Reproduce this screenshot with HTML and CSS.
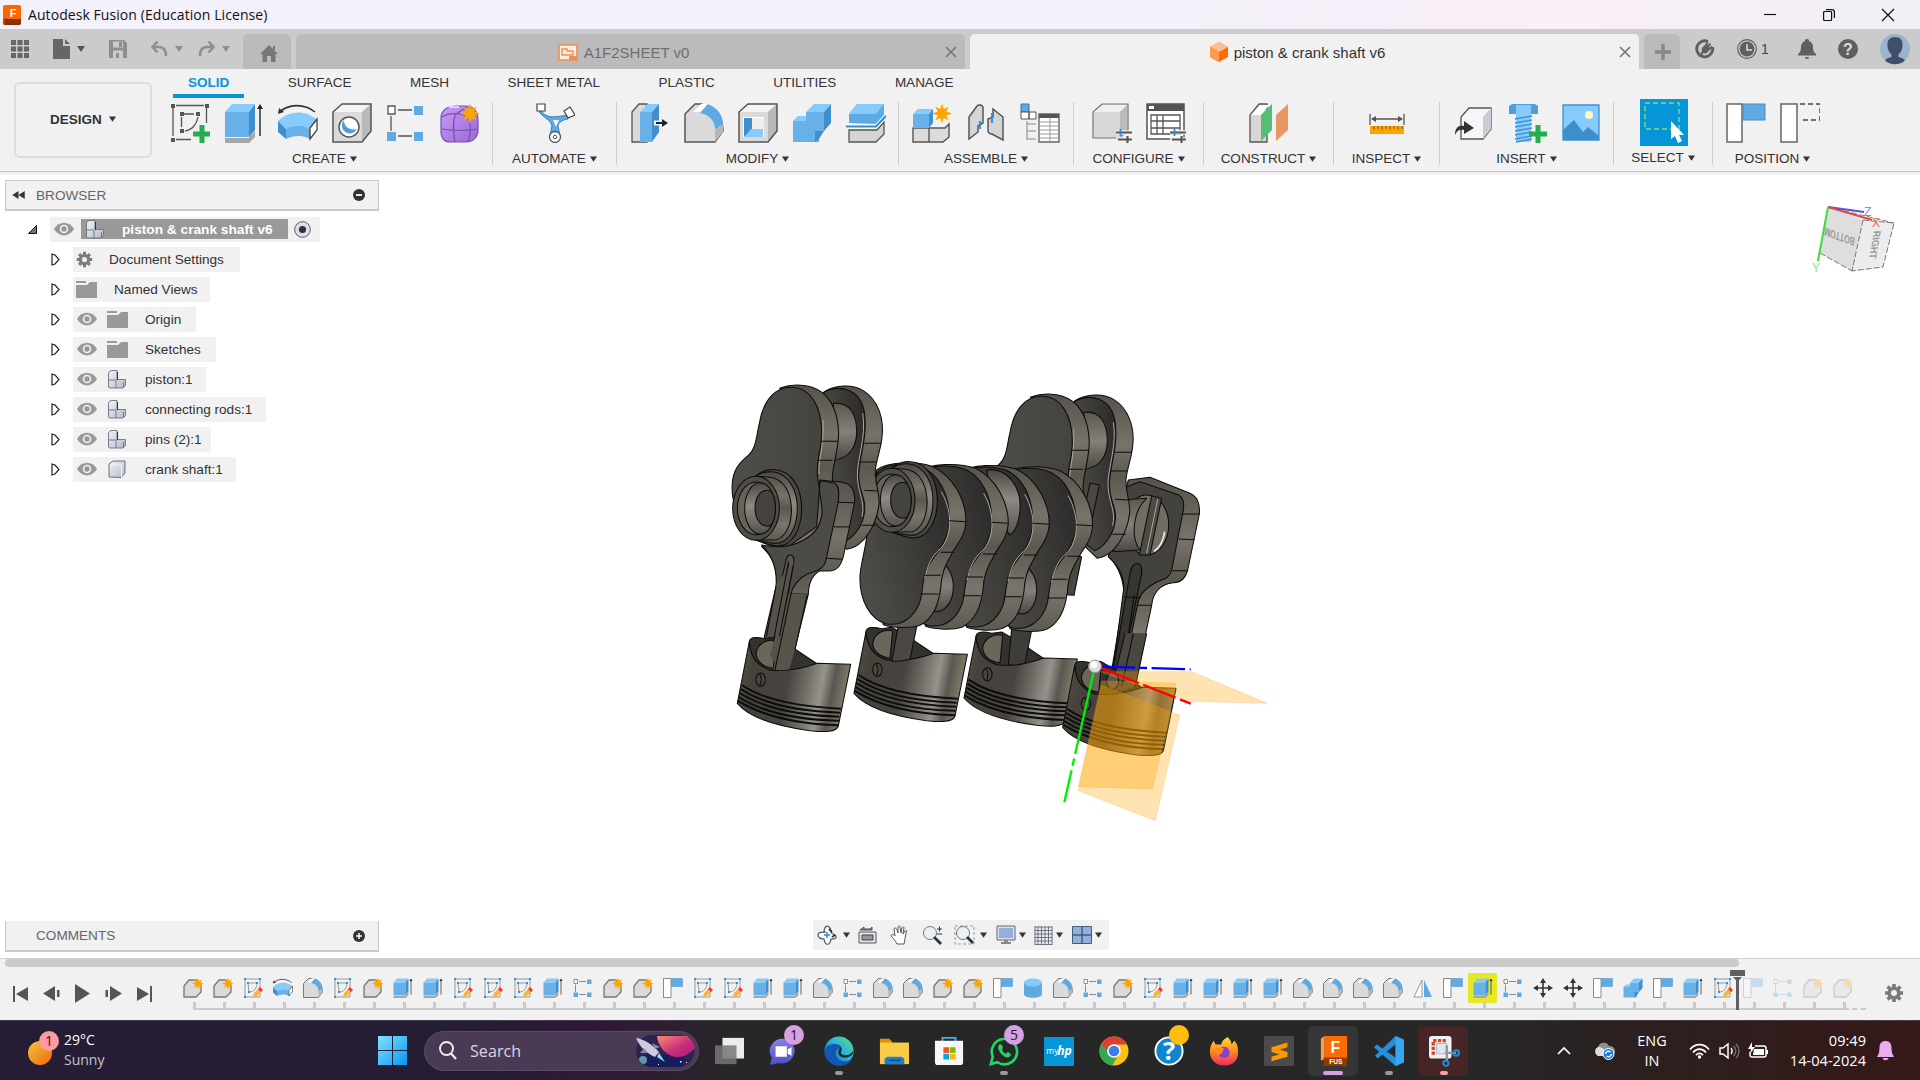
FILE: index.html
```html
<!DOCTYPE html>
<html lang="en">
<head>
<meta charset="utf-8">
<title>Autodesk Fusion (Education License)</title>
<link rel="stylesheet" href="styles.css">
</head>
<body>
<svg class="defs" width="0" height="0">
  <defs>
    <linearGradient id="gSide" x1="0" y1="0" x2="0" y2="1"><stop offset="0" stop-color="#55524b"/><stop offset=".3" stop-color="#77736a"/><stop offset=".5" stop-color="#5b5850"/><stop offset=".75" stop-color="#79756c"/><stop offset="1" stop-color="#5d5a51"/></linearGradient>
    <linearGradient id="gFace" x1="0" y1="0" x2="1" y2="0"><stop offset="0" stop-color="#504e49"/><stop offset="1" stop-color="#45433f"/></linearGradient>
    <linearGradient id="gFaceD" x1="0" y1=".6" x2="1" y2=".2"><stop offset="0" stop-color="#4e4c48"/><stop offset=".5" stop-color="#3f3d3a"/><stop offset="1" stop-color="#2d2b29"/></linearGradient>
    <linearGradient id="gPin" x1="0" y1="0" x2="0" y2="1"><stop offset="0" stop-color="#5b584f"/><stop offset=".5" stop-color="#85807a"/><stop offset="1" stop-color="#4a4740"/></linearGradient>
    <linearGradient id="gPis" x1="0" y1="0" x2="1" y2=".15"><stop offset="0" stop-color="#5a564c"/><stop offset=".18" stop-color="#45423c"/><stop offset=".5" stop-color="#47443f"/><stop offset=".66" stop-color="#6f6c66"/><stop offset=".8" stop-color="#96938c"/><stop offset=".9" stop-color="#5b5750"/><stop offset="1" stop-color="#7b7566"/></linearGradient>
    <linearGradient id="gRing" x1="0" y1="0" x2="0" y2="1"><stop offset="0" stop-color="#4b4843"/><stop offset=".45" stop-color="#8d8a84"/><stop offset="1" stop-color="#55524b"/></linearGradient>
    <linearGradient id="gGray" x1="0" y1="0" x2="1" y2="1"><stop offset="0" stop-color="#f0f2f7"/><stop offset="1" stop-color="#b4bac6"/></linearGradient>
    <linearGradient id="gEdge" x1="1" y1="0" x2="0" y2="1"><stop offset="0" stop-color="#63e06b"/><stop offset=".4" stop-color="#2db9d8"/><stop offset="1" stop-color="#0b62c4"/></linearGradient>
    <linearGradient id="gFox" x1="0" y1="0" x2="0" y2="1"><stop offset="0" stop-color="#ffd93b"/><stop offset=".5" stop-color="#ff8a1e"/><stop offset="1" stop-color="#f0246c"/></linearGradient>
    <linearGradient id="gSun" x1="0" y1="0" x2="1" y2="1"><stop offset="0" stop-color="#f6c33a"/><stop offset="1" stop-color="#ee6a12"/></linearGradient>
    <linearGradient id="gWin" x1="0" y1="0" x2="1" y2="1"><stop offset="0" stop-color="#7fe3ff"/><stop offset="1" stop-color="#0a95f5"/></linearGradient>
    <linearGradient id="gChat" x1="0" y1="0" x2="0" y2="1"><stop offset="0" stop-color="#8a7fe6"/><stop offset="1" stop-color="#4950c4"/></linearGradient>
    <linearGradient id="gPlanet" x1="0" y1="0" x2="1" y2="1"><stop offset="0" stop-color="#ff8a72"/><stop offset=".55" stop-color="#c92f7c"/><stop offset=".85" stop-color="#b0207c"/><stop offset="1" stop-color="#ff9a72"/></linearGradient>
    <linearGradient id="gForm" x1="0" y1="0" x2="1" y2="1"><stop offset="0" stop-color="#c79bf5"/><stop offset="1" stop-color="#9b68d6"/></linearGradient>
  </defs>

  <symbol id="star" viewBox="0 0 20 20"><path d="M10 0l1.800 5.600L16.800 3l-2.600 5L20 10l-5.800 2L16.800 17l-5-2.600L10 20l-1.800-5.600L3.200 17l2.600-5L0 10l5.800-2L3.200 3l5 2.600z" fill="#f9a602"/></symbol>
  <symbol id="plus" viewBox="0 0 18 18"><path d="M6.500 0h5v6.500H18v5h-6.500V18h-5v-6.500H0v-5h6.500z" fill="#25ae4f"/></symbol>

  <symbol id="i-sketch" viewBox="0 0 40 40"><g fill="none" stroke="#555" stroke-width="1.300"><path d="M6 2.500h28M3 5v28M36.500 5v15M6 36.500h15"/><path d="M14 11h10M11.500 14v10M28 14c-1 7-6 13-13 14"/></g><path d="M1 1h4v4H1zM35 1h4v4h-4zM1 35h4v4H1zM10 9h4v4h-4zM26 9h4v4h-4zM10 26h4v4h-4z" fill="#555"/><use href="#plus" x="23" y="22" width="18" height="18"/></symbol>
  <symbol id="i-extrude" viewBox="0 0 40 40"><path d="M1 35h24v5H1zM25 40l6-6v-6l-6 6z" fill="#a6a6a6"/><path d="M1 34V9h24v25z" fill="#68b1e8"/><path d="M1 9l7-8h23l-6 8z" fill="#86cbfb"/><path d="M25 9l6-8v26l-6 7z" fill="#3f8fcf"/><path d="M36 5v28" stroke="#222" stroke-width="1.400"/><path d="M36 1l3 5h-6z" fill="#222"/></symbol>
  <symbol id="i-revolve" viewBox="0 0 40 40"><path d="M2 9C10 1 26 0 37 9" fill="none" stroke="#333" stroke-width="1.600"/><path d="M0 11l1-6 5 4z" fill="#333"/><path d="M0 18C12 7 28 7 39 17l-7 9c-6-4-16-5-24 0z" fill="#86cbfb"/><path d="M8 26c8-5 18-4 24 0v10c-6-4-16-4-24 0z" fill="#68b1e8"/><path d="M0 18l8 8v10L0 29z" fill="#3f8fcf"/><path d="M32 25l7-9v11l-7 9z" fill="#fff" stroke="#444" stroke-width="1.300"/></symbol>
  <symbol id="cube" viewBox="0 0 40 40"><path d="M1 39V9l9-8h29v27L30 39z" fill="#dadada"/><path d="M1 9l9-8h29l-9 8z" fill="#f4f4f4"/><path d="M30 9l9-8v27l-9 11z" fill="#b9b9b9"/><path d="M1 39V9l9-8h29v27L30 39z" fill="none" stroke="#555" stroke-width="1.500"/></symbol>
  <symbol id="i-hole" viewBox="0 0 40 40"><use href="#cube"/><circle cx="17" cy="24" r="10" fill="#fff" stroke="#555" stroke-width="1.500"/><path d="M12 17a8 8 0 1 0 13 9c-7 2-13-2-13-9z" fill="#4f9ed9"/></symbol>
  <symbol id="i-pattern" viewBox="0 0 40 40"><path d="M12 7h14M5 13v15M12 33h14" stroke="#555" stroke-width="1.300" fill="none"/><path d="M2 3h7v8H2z" fill="#fff" stroke="#555" stroke-width="1.300"/><path d="M28 3h9v9h-9zM1 29h9v9H1zM28 29h9v9h-9z" fill="#5faae2"/></symbol>
  <symbol id="i-form" viewBox="0 0 40 40"><path d="M1 15C1 7 8 3 16 3h10c8 0 12 6 12 14v10c0 7-5 12-12 12H10c-6 0-9-4-9-10z" fill="url(#gForm)" stroke="#7a4fb5" stroke-width="1.200"/><path d="M2 26c12 2 24 2 36 0M15 39C13 28 13 16 16 11L27 4M2 14c6-4 16-4 26-1 3 8 3 18 0 26" stroke="#7a4fb5" fill="none" stroke-width="1.200"/><path d="M9 4h10" stroke="#e4ccff" stroke-width="2"/><use href="#star" x="20" y="0" width="20" height="21"/></symbol>
  <symbol id="i-automate" viewBox="0 0 40 40"><path d="M6 7c4 8 12 8 26 5l1 4c-6 1-9 3-10 7l2 9c1 8-12 8-10 0l2-9c-1-6-8-8-13-14z" fill="#5faae2" stroke="#3d7fb5"/><path d="M18 17h6l-3 7z" fill="#f1f1f1"/><circle cx="20" cy="34" r="5.500" fill="#fff" stroke="#555" stroke-width="1.300"/><circle cx="20" cy="34" r="1.800" fill="none" stroke="#555"/><path d="M2 1h8v7H2zM29 8l6-4 5 8-7 3z" fill="#fff" stroke="#444" stroke-width="1.200"/></symbol>
  <symbol id="i-press" viewBox="0 0 40 40"><path d="M2 39V9l7-8h8v38z" fill="#dadada" stroke="#555" stroke-width="1.300"/><path d="M10 39V9h12v30z" fill="#68b1e8"/><path d="M10 9l8-8h11l-7 8z" fill="#86cbfb"/><path d="M22 9l7-8v28l-7 10z" fill="#3f8fcf"/><path d="M24 20h12" stroke="#f1f1f1" stroke-width="5"/><path d="M26 20h8" stroke="#222" stroke-width="2"/><path d="M38 20l-6-4v8z" fill="#222"/></symbol>
  <symbol id="i-fillet" viewBox="0 0 40 40"><path d="M1 39V11l10-10h6c14 3 22 14 22 27L31 39z" fill="#dadada" stroke="#555" stroke-width="1.500"/><path d="M31 27c0-9-5-15-15-17L24 1c10 4 15 12 15 20z" fill="#5faae2"/><path d="M9 9L17 1h7l-8 8z" fill="#fff"/><path d="M31 39V28l8-7v8z" fill="#b5b5b5"/></symbol>
  <symbol id="i-shell" viewBox="0 0 40 40"><use href="#cube"/><path d="M5 14h21v20H5z" fill="#fff"/><path d="M6 15h8v19H6z" fill="#3f8fcf"/><path d="M6 34l7-8h12v8z" fill="#86cbfb"/><path d="M14 15h12v11H14z" fill="#eee"/></symbol>
  <symbol id="i-combine" viewBox="0 0 40 40"><path d="M1 39V18h13V9h18v19h-5v11z" fill="#68b1e8"/><path d="M1 18l5-5h8v5zM14 9l8-8h17l-7 8z" fill="#86cbfb"/><path d="M32 9l7-8v19l-7 8zM23 39V28h9l-5 8z" fill="#3f8fcf"/></symbol>
  <symbol id="i-split" viewBox="0 0 40 40"><path d="M3 20v-9l8-10h27v12l-7 8z" fill="#5faae2"/><path d="M3 11l8-10h27l-8 10z" fill="#86cbfb"/><path d="M3 27h28l7-8v12l-8 8H3z" fill="#d4d4d4" stroke="#555" stroke-width="1.300"/><path d="M0 23.500h30L40 13" fill="none" stroke="#fff" stroke-width="4"/><path d="M0 23.500h30L40 13" fill="none" stroke="#2f8bd6" stroke-width="2"/></symbol>
  <symbol id="i-newcomp" viewBox="0 0 40 40"><path d="M1 25h32l4-4v13l-6 5H1z" fill="#dcdcdc" stroke="#555" stroke-width="1.400"/><path d="M17 25v14" stroke="#555" stroke-width="1.400"/><path d="M1 25V11h16v14z" fill="#68b1e8"/><path d="M1 11l5-5h15l-4 5z" fill="#86cbfb"/><path d="M17 11l4-5v14l-4 5z" fill="#3f8fcf"/><use href="#star" x="20" y="0" width="20" height="21"/></symbol>
  <symbol id="i-joint" viewBox="0 0 40 40"><path d="M3 14L11 3c2-2 5-1 6 1v16l-5 3v6L3 36z" fill="#d5d5d5" stroke="#555" stroke-width="1.500"/><path d="M37 37L26 31c-3 0-4-2-4-4V16l5-2V6l10 8z" fill="#d5d5d5" stroke="#555" stroke-width="1.500"/><path d="M14 18v8M26 10v10" stroke="#1f8ee8" stroke-width="1.800"/></symbol>
  <symbol id="i-bom" viewBox="0 0 40 40"><path d="M1 1h8v8H1z" fill="#5faae2" stroke="#2e78b3"/><path d="M1 9h8v7H1zM9 9h7v7H9z" fill="#fff" stroke="#555"/><path d="M7 18v19M7 21h9M7 28h9M7 36h9" stroke="#888" fill="none"/><path d="M19 11h20v28H19z" fill="#fff" stroke="#666" stroke-width="1.400"/><path d="M19 11h20v4H19z" fill="#555"/><path d="M19 19h20M19 23h20M19 27h20M19 31h20M19 35h20M30 15v24" stroke="#999"/></symbol>
  <symbol id="sliders" viewBox="0 0 18 16"><path d="M0 4h18M0 12h18" stroke="#f1f1f1" stroke-width="5"/><path d="M0 4h18M2 12h16" stroke="#555" stroke-width="2.400"/><path d="M5 0v8" stroke="#1f8ee8" stroke-width="2"/><path d="M13 8v8" stroke="#555" stroke-width="2.400"/></symbol>
  <symbol id="i-config" viewBox="0 0 40 40"><path d="M1 35V9l9-8h26v26l-8 8z" fill="#d8d8d8" stroke="#777" stroke-width="1.200"/><path d="M2 9l9-7h24l-7 7z" fill="#f0f0f0"/><path d="M28 9l7-7v25l-7 8z" fill="#bbb"/><use href="#sliders" x="23" y="26" width="18" height="14"/></symbol>
  <symbol id="i-ctable" viewBox="0 0 40 40"><path d="M1 1h37v35H1z" fill="#fff" stroke="#555" stroke-width="1.500"/><path d="M1 1h37v7H1z" fill="#555"/><path d="M3 3h5v3H3z" fill="#fff"/><path d="M5 12h29v19H5zM5 18h29M5 25h29M11 12v19M17 12v19" fill="none" stroke="#555" stroke-width="1.300"/><use href="#sliders" x="23" y="26" width="18" height="14"/></symbol>
  <symbol id="i-construct" viewBox="0 0 40 40"><path d="M1 39V12L10 1h8v38z" fill="#d6d6d6" stroke="#555" stroke-width="1.300"/><path d="M2 12l9-10h9l-8 10z" fill="#fff"/><path d="M12 38V12L23 1v26z" fill="#52bf74"/><path d="M27 38V12L39 1v26z" fill="#e79762"/></symbol>
  <symbol id="i-inspect" viewBox="0 0 40 40"><path d="M3 11v11M37 11v11M5 16h30" stroke="#555" stroke-width="1.300"/><path d="M4 16l5-3v6zM36 16l-5-3v6z" fill="#555"/><path d="M3 23h34v8H3z" fill="#f9a602"/><path d="M7 23v4M11 23v3M15 23v4M19 23v3M23 23v4M27 23v3M31 23v4M35 23v3" stroke="#7a5200" stroke-width="1"/></symbol>
  <symbol id="i-insert" viewBox="0 0 40 40"><path d="M8 36V14l8-9h22v21l-8 10z" fill="#f6f6f8" stroke="#555" stroke-width="1.300"/><path d="M30 14l8-9v21l-8 10z" fill="#c9ccd4"/><path d="M2 32c0-9 5-10 9-9v-5l10 7-10 6v-4c-4-1-7 0-9 5z" fill="#333"/></symbol>
  <symbol id="i-bolt" viewBox="0 0 40 40"><path d="M2 3l3-2h23l3 2v8H2z" fill="#4f9ed9"/><path d="M9 2h15v9H9z" fill="#86cbfb"/><path d="M9 11h15v28H9z" fill="#86cbfb"/><path d="M8 16l17-3M8 20l17-3M8 24l17-3M8 28l17-3M8 32l17-3M8 36l17-3M9 39l16-3" stroke="#3f8fcf" stroke-width="1.400"/><use href="#plus" x="22" y="22" width="18" height="18"/></symbol>
  <symbol id="i-image" viewBox="0 0 40 40"><path d="M2 2h36v35H2z" fill="#86cbfb" stroke="#3f8fcf" stroke-width="1.300"/><path d="M2 37V27l11-10 9 12 5-5 11 9v4z" fill="#3c8fca"/><circle cx="28" cy="12" r="4" fill="#fff9c8"/></symbol>
  <symbol id="i-select" viewBox="0 0 48 47"><path d="M0 0h48v47H0z" fill="#0696d7"/><path d="M5 4h34v26H5z" fill="none" stroke="#7ae07a" stroke-width="1.400" stroke-dasharray="5 3"/><path d="M31 22v18l4-3 3 7 4-2-3-6h5z" fill="#fff"/></symbol>
  <symbol id="i-flag" viewBox="0 0 40 40"><path d="M1 1h15v38H1z" fill="#fff" stroke="#666" stroke-width="1.500"/><path d="M17 1h22v16H17z" fill="#5faae2" stroke="#4a8fc2"/></symbol>
  <symbol id="i-revert" viewBox="0 0 40 40"><path d="M1 1h16v38H1z" fill="#fff" stroke="#666" stroke-width="1.500"/><path d="M20 1h20v16H20" fill="none" stroke="#444" stroke-width="1.400" stroke-dasharray="5 3"/></symbol>

  <symbol id="t-new" viewBox="0 0 20 20"><path d="M1 19V8l5-6h7l5 5v7l-5 5z" fill="#dadada" stroke="#777" stroke-width="1.300"/><use href="#star" x="9" y="-.5" width="12" height="12"/></symbol>
  <symbol id="t-sketch" viewBox="0 0 20 20"><path d="M2 1h15v18H2zM5 5h9c0 5-3 9-8 9z" fill="none" stroke="#999"/><path d="M1 0h2v2H1zM16 0h2v2h-2zM1 18h2v2H1zM4 4h2v2H4zM13 4h2v2h-2zM5 13h2v2H5z" fill="#2b8fe0"/><path d="M10 19l1-4 5-5 3 3-5 5z" fill="#f7b53a"/><path d="M15 11l2-2 3 3-2 2z" fill="#e8373e"/></symbol>
  <symbol id="t-cyl" viewBox="0 0 20 20"><path d="M1 4v12c0 5 18 5 18 0V4z" fill="#5faae2"/><ellipse cx="10" cy="4.500" rx="9" ry="4" fill="#86cbfb"/></symbol>
  <symbol id="t-mirror" viewBox="0 0 20 20"><path d="M9 2v17H1z" fill="#fff" stroke="#999"/><path d="M11 2v17h8z" fill="#5faae2"/></symbol>
  <symbol id="t-move" viewBox="0 0 20 20"><path d="M10 3v14M3 10h14" stroke="#333" stroke-width="1.600"/><path d="M10 0l3 5H7zM10 20l3-5H7zM0 10l5-3v6zM20 10l-5-3v6z" fill="#333"/></symbol>

  <symbol id="eye" viewBox="0 0 20 14"><path d="M0 7C5-1.500 15-1.500 20 7 15 15.500 5 15.500 0 7z" fill="#999"/><circle cx="10" cy="7" r="4.300" fill="#f1f1f1"/><circle cx="10" cy="7" r="2.700" fill="#999"/></symbol>
  <symbol id="folder" viewBox="0 0 21 17"><path d="M0 0h10v2H0zM0 4h11l3-3h7v16H0z" fill="#999"/></symbol>
  <symbol id="gear" viewBox="0 0 20 20"><path d="M10 1v18M1 10h18M3.600 3.600l12.800 12.800M16.400 3.600L3.600 16.400" stroke="#7b7b7b" stroke-width="3.600"/><circle cx="10" cy="10" r="4.800" fill="none" stroke="#7b7b7b" stroke-width="3.600"/><circle cx="10" cy="10" r="3" fill="#f1f1f1"/></symbol>
  <symbol id="comp" viewBox="0 0 18 19"><path d="M.5 17V2.500L3 .5h6v9h8.500v6L15 18H1.500z" fill="url(#gGray)" stroke="#6b7280" stroke-width=".9"/><path d="M8 10v8M1 10h7M15.500 12v6" stroke="#6b7280" fill="none" stroke-width=".9"/><path d="M9.500 2v8" stroke="#333" stroke-width="1"/></symbol>
  <symbol id="body" viewBox="0 0 18 19"><path d="M1 17V4l4-3h12v12l-4 4.500z" fill="url(#gGray)" stroke="#6b7280"/><path d="M2 5h11M13.500 5v12" stroke="#f5f6f9" fill="none"/></symbol>
  <symbol id="tri" viewBox="0 0 9 13"><path d="M1 1v11l3-1 4-4.500L4 2z" fill="#fff" stroke="#222" stroke-width="1.200"/></symbol>
  <symbol id="caret" viewBox="0 0 8 6"><path d="M0 0h8L4 6z" fill="currentColor"/></symbol>
  <symbol id="x" viewBox="0 0 12 12"><path d="M1 1l10 10M11 1L1 11" stroke="currentColor" stroke-width="1.700"/></symbol>
</svg>

<header class="title-bar">
  <svg class="app-logo" viewBox="0 0 18 20"><rect width="18" height="20" rx="2" fill="#f60"/><path d="M0 14l4-1v7H2a2 2 0 0 1-2-2z" fill="#b84300"/><path d="M2 14h16v4a2 2 0 0 1-2 2H2z" fill="#8a3100"/><text x="10" y="11.500" text-anchor="middle" class="logo-f">F</text></svg>
  <span class="app-title">Autodesk Fusion (Education License)</span>
  <div class="win-controls">
    <svg width="12" height="12" viewBox="0 0 12 12"><path d="M0 5.500h12" stroke="#111" stroke-width="1.200"/></svg>
    <svg width="12" height="12" viewBox="0 0 12 12"><path d="M.6 3.500a1 1 0 0 1 1-1h6a1 1 0 0 1 1 1v7a1 1 0 0 1-1 1h-6a1 1 0 0 1-1-1zM3 .6h6c1.500 0 2.400.9 2.400 2.400v6" fill="none" stroke="#111" stroke-width="1.200"/></svg>
    <svg width="12" height="12" viewBox="0 0 12 12"><path d="M0 0l12 12M12 0L0 12" stroke="#111" stroke-width="1.200"/></svg>
  </div>
</header>

<nav class="doc-bar">
  <div class="quick">
    <svg class="q-grid" viewBox="0 0 18 18"><path d="M0 0h5v5H0zM6.500 0h5v5h-5zM13 0h5v5h-5zM0 6.500h5v5H0zM6.500 6.500h5v5h-5zM13 6.500h5v5h-5zM0 13h5v5H0zM6.500 13h5v5h-5zM13 13h5v5h-5z" fill="#666"/></svg>
    <svg class="q-file" viewBox="0 0 17 20"><path d="M0 0h10v7h7v13H0zM12 0l5 5h-5z" fill="#666"/></svg>
    <svg class="q-caret"><use href="#caret"/></svg>
    <svg class="q-save" viewBox="0 0 18 18"><path d="M0 0h15l3 3v15H0zM4 1.500v6h10v-6zM4 10.500V18h10v-7.500z" fill="#8f8f8f" fill-rule="evenodd"/><path d="M10 2h3v5h-3zM7 13h3v5H7z" fill="#8f8f8f"/></svg>
    <svg class="q-undo" viewBox="0 0 17 16"><path d="M6.500.5L1.500 6l5 5.500M2 6h6c5 0 7 3 7 9" fill="none" stroke="#8f8f8f" stroke-width="2.600"/></svg>
    <svg class="q-caret dim"><use href="#caret"/></svg>
    <svg class="q-redo" viewBox="0 0 17 16"><path d="M10.500.5l5 5.500-5 5.500M15 6H9c-5 0-7 3-7 9" fill="none" stroke="#8f8f8f" stroke-width="2.600"/></svg>
    <svg class="q-caret dim"><use href="#caret"/></svg>
  </div>
  <div class="tab home"><svg width="18" height="17" viewBox="0 0 18 17"><path d="M9 0l9 9h-2.500v8H11v-6H7v6H2.500V9H0zM13 1h2v4h-2z" fill="#777"/></svg></div>
  <div class="tab doc">
    <svg width="20" height="17" viewBox="0 0 20 17"><path d="M1 1h18v15H1z" fill="#fbeee4" stroke="#ee8f4e" stroke-width="1.600"/><path d="M4 5h5v2h6v4H4z" fill="none" stroke="#ee8f4e" stroke-width="1.300"/><path d="M11 12h8v4h-8z" fill="#ee8f4e"/></svg>
    <span>A1F2SHEET v0</span><svg class="close"><use href="#x"/></svg>
  </div>
  <div class="tab doc active">
    <svg width="18" height="20" viewBox="0 0 18 20"><path d="M9 0l9 5v10l-9 5-9-5V5z" fill="#ff6a05"/><path d="M9 0l9 5-9 5-9-5z" fill="#ffc08f"/><path d="M0 5l9 5v10l-9-5z" fill="#ff9a4a"/></svg>
    <span>piston &amp; crank shaft v6</span><svg class="close"><use href="#x"/></svg>
  </div>
  <div class="tab add"><svg width="16" height="16" viewBox="0 0 16 16"><path d="M8 0v16M0 8h16" stroke="#888" stroke-width="3.400"/></svg></div>
  <div class="account">
    <svg width="20" height="20" viewBox="0 0 20 20"><path d="M13 2.500A8 8 0 1 0 17.500 8M9.500 18a8 8 0 0 0 8-7" fill="none" stroke="#5f5f5f" stroke-width="2.800"/><path d="M4 17l3-5c-1-2 0-4 2-5l3-4 1.500 1-2 3 3.500-3 1 1.500L13 9l3.500-2 1 1.500-4 3.500c-1 2-3 3-5 2l-3 4z" fill="#5f5f5f"/></svg>
    <svg width="20" height="20" viewBox="0 0 20 20"><circle cx="10" cy="10" r="9.300" fill="none" stroke="#5f5f5f" stroke-width="1.200"/><circle cx="10" cy="10" r="7.400" fill="#5f5f5f"/><path d="M10 5v6h5" fill="none" stroke="#ddd" stroke-width="1.500"/></svg>
    <span class="jobs">1</span>
    <svg class="a-bell" width="18" height="20" viewBox="0 0 18 20"><path d="M9 0c2 0 2 1.500 2 2 3 1 4 3.500 4 6 0 4 1 5.500 3 7v1.500H0V15c2-1.500 3-3 3-7 0-2.500 1-5 4-6 0-.5 0-2 2-2zM7 18h4c0 2.500-4 2.500-4 0z" fill="#5f5f5f"/></svg>
    <svg class="a-help" width="20" height="20" viewBox="0 0 20 20"><circle cx="10" cy="10" r="10" fill="#5f5f5f"/><text x="10" y="15.500" text-anchor="middle" class="q-mark">?</text></svg>
    <svg width="30" height="30" viewBox="0 0 30 30"><circle cx="15" cy="15" r="15" fill="#9db2cf"/><path d="M15 3c6 0 8 4 7.500 9-.3 4-2 7-4 8v3c3 1 5 1 6.500 3.500a15 15 0 0 1-20 0C6.500 24 8.500 24 11.500 23v-3c-2-1-3.700-4-4-8C7 7 9 3 15 3z" fill="#3f4f68"/></svg>
  </div>
</nav>

<section class="ribbon">
  <div class="workspace"><div class="ws-button">DESIGN <svg class="caret"><use href="#caret"/></svg></div></div>
  <div class="ribbon-main">
    <div class="ribbon-tabs"><span class="on">SOLID</span><span>SURFACE</span><span>MESH</span><span>SHEET METAL</span><span>PLASTIC</span><span>UTILITIES</span><span>MANAGE</span></div>
    <div class="groups">
      <div class="group g-create"><div class="icons"><svg><use href="#i-sketch"/></svg><svg><use href="#i-extrude"/></svg><svg><use href="#i-revolve"/></svg><svg><use href="#i-hole"/></svg><svg><use href="#i-pattern"/></svg><svg><use href="#i-form"/></svg></div><div class="label">CREATE<svg class="caret"><use href="#caret"/></svg></div></div>
      <div class="group g-automate"><div class="icons"><svg><use href="#i-automate"/></svg></div><div class="label">AUTOMATE<svg class="caret"><use href="#caret"/></svg></div></div>
      <div class="group g-modify"><div class="icons"><svg><use href="#i-press"/></svg><svg><use href="#i-fillet"/></svg><svg><use href="#i-shell"/></svg><svg><use href="#i-combine"/></svg><svg><use href="#i-split"/></svg></div><div class="label">MODIFY<svg class="caret"><use href="#caret"/></svg></div></div>
      <div class="group g-assemble"><div class="icons"><svg><use href="#i-newcomp"/></svg><svg><use href="#i-joint"/></svg><svg><use href="#i-bom"/></svg></div><div class="label">ASSEMBLE<svg class="caret"><use href="#caret"/></svg></div></div>
      <div class="group g-configure"><div class="icons"><svg><use href="#i-config"/></svg><svg><use href="#i-ctable"/></svg></div><div class="label">CONFIGURE<svg class="caret"><use href="#caret"/></svg></div></div>
      <div class="group g-construct"><div class="icons"><svg><use href="#i-construct"/></svg></div><div class="label">CONSTRUCT<svg class="caret"><use href="#caret"/></svg></div></div>
      <div class="group g-inspect"><div class="icons"><svg><use href="#i-inspect"/></svg></div><div class="label">INSPECT<svg class="caret"><use href="#caret"/></svg></div></div>
      <div class="group g-insert"><div class="icons"><svg><use href="#i-insert"/></svg><svg><use href="#i-bolt"/></svg><svg><use href="#i-image"/></svg></div><div class="label">INSERT<svg class="caret"><use href="#caret"/></svg></div></div>
      <div class="group g-select"><div class="icons"><svg class="sel"><use href="#i-select"/></svg></div><div class="label">SELECT<svg class="caret"><use href="#caret"/></svg></div></div>
      <div class="group g-position"><div class="icons"><svg><use href="#i-flag"/></svg><svg><use href="#i-revert"/></svg></div><div class="label">POSITION<svg class="caret"><use href="#caret"/></svg></div></div>
    </div>
  </div>
</section>

<main class="canvas">
  <aside class="side">
    <div class="panel browser-head"><svg width="13" height="8" viewBox="0 0 14 9"><path d="M7 0v9L0 4.500zM14 0v9L7 4.500z" fill="#333"/></svg><span>BROWSER</span><svg class="knob" viewBox="0 0 12 12"><circle cx="6" cy="6" r="6" fill="#333"/><path d="M3 6h6" stroke="#fff" stroke-width="1.800"/></svg></div>
    <div class="tree">
      <div class="row root"><svg class="open" viewBox="0 0 9 9"><path d="M8.500.5v8h-8z" fill="#777" stroke="#111"/></svg>
        <div class="chip"><svg class="eye"><use href="#eye"/></svg><div class="chosen"><svg class="comp"><use href="#comp"/></svg><span>piston &amp; crank shaft v6</span></div><svg class="radio" viewBox="0 0 18 18"><circle cx="9" cy="9" r="8.300" fill="#d9dfec" stroke="#555"/><circle cx="9" cy="9" r="3.800" fill="#333"/></svg></div></div>
      <div class="row"><svg class="tri"><use href="#tri"/></svg><div class="chip w-doc"><svg class="gear"><use href="#gear"/></svg><span class="t-doc">Document Settings</span></div></div>
      <div class="row"><svg class="tri"><use href="#tri"/></svg><div class="chip w-views"><svg class="folder"><use href="#folder"/></svg><span class="t-views">Named Views</span></div></div>
      <div class="row"><svg class="tri"><use href="#tri"/></svg><div class="chip w-origin"><svg class="eye"><use href="#eye"/></svg><svg class="folder"><use href="#folder"/></svg><span>Origin</span></div></div>
      <div class="row"><svg class="tri"><use href="#tri"/></svg><div class="chip w-sk"><svg class="eye"><use href="#eye"/></svg><svg class="folder"><use href="#folder"/></svg><span>Sketches</span></div></div>
      <div class="row"><svg class="tri"><use href="#tri"/></svg><div class="chip w-piston"><svg class="eye"><use href="#eye"/></svg><svg class="comp"><use href="#comp"/></svg><span>piston:1</span></div></div>
      <div class="row"><svg class="tri"><use href="#tri"/></svg><div class="chip w-rods"><svg class="eye"><use href="#eye"/></svg><svg class="comp"><use href="#comp"/></svg><span>connecting rods:1</span></div></div>
      <div class="row"><svg class="tri"><use href="#tri"/></svg><div class="chip w-pins"><svg class="eye"><use href="#eye"/></svg><svg class="comp"><use href="#comp"/></svg><span>pins (2):1</span></div></div>
      <div class="row"><svg class="tri"><use href="#tri"/></svg><div class="chip w-crank"><svg class="eye"><use href="#eye"/></svg><svg class="comp"><use href="#body"/></svg><span>crank shaft:1</span></div></div>
    </div>
  </aside>

  <svg class="model" viewBox="0 0 1680 1380">
    <defs>
      <g id="upBack" class="ln">
        <path d="M312 66C345 44 400 42 430 62C475 90 490 145 487 190C485 235 470 262 466 300C464 340 480 368 477 402C470 460 435 530 380 538L320 480L310 100Z" fill="url(#gSide)"/>
        <path d="M310 68C360 40 420 60 432 120C446 200 415 265 416 320C418 370 442 390 432 435C424 480 390 508 372 515L310 470Z" fill="url(#gFaceD)"/>
        <path d="M428 130C440 200 411 265 412 320C414 370 436 395 426 440" class="hl"/>
        <path d="M340 100C390 94 410 135 410 185C410 230 388 268 336 272Z" fill="url(#gPin)"/>
        <path d="M433 220H484M420 276H470M433 361L472 363M425 466H466"/>
      </g>
      <g id="upFront" class="ln">
        <path d="M180 54C230 36 290 46 320 80C350 115 360 170 354 215C350 255 338 290 337 325L345 400L300 480L200 535L150 440L200 200Z" fill="url(#gSide)"/>
        <path d="M38 380C30 315 50 285 78 262C110 240 108 200 118 160C130 90 165 50 218 52C272 54 304 110 305 185C306 240 290 262 292 312C295 362 316 400 300 448C285 492 240 532 190 535C120 530 60 480 38 380Z" fill="url(#gFace)"/>
        <path d="M309 150C312 240 295 262 297 312" class="hl"/>
        <path d="M303 214H354M292 271H338"/>
      </g>
      <g id="down" class="ln">
        <path d="M470 300C500 275 590 272 640 290C700 320 738 390 738 455C735 505 704 528 692 558C672 592 664 615 662 655C655 705 640 745 600 766C570 776 520 774 490 764L440 600Z" fill="url(#gSide)"/>
        <path d="M440 500C435 545 422 580 420 620C418 690 450 750 500 762C545 768 580 745 598 700C612 660 602 640 622 595C640 552 686 525 688 452C690 380 660 310 600 290C540 275 490 285 470 310Z" fill="url(#gFaceD)"/>
        <path d="M664 365C702 430 693 505 661 536C633 560 622 590 614 625" class="hl"/>
        <path d="M688 452L738 455M662 547H703M612 616H662M602 672H655"/>
      </g>
      <g id="piston" class="ln">
        <path d="M88 815C90 800 110 800 135 806L165 802L222 835L292 882L200 910L150 904C105 885 90 855 88 815Z" fill="#34322e"/>
        <path d="M108 850C112 818 145 806 168 812L160 895C130 890 110 875 108 850Z" fill="#6a665c"/>
        <path d="M88 815C90 855 105 885 150 900C205 906 250 895 292 880L392 883L355 1068C350 1088 310 1086 270 1082C180 1070 90 1045 52 1000Z" fill="url(#gPis)"/>
        <path d="M66 945C130 990 240 1010 363 1016M62 957C130 1002 240 1024 360 1028M59 969C130 1014 240 1036 358 1040M56 981C130 1028 240 1050 357 1052M53 992C130 1040 240 1062 355 1066" class="rings"/>
        <ellipse cx="122" cy="929" rx="14" ry="20" fill="#4b473f"/><path d="M119 912Q128 928 120 946"/>
      </g>
      <g id="hub" class="ln">
        <path d="M108 318C130 300 150 297 165 299C215 302 245 355 245 415C245 480 215 530 170 528C140 526 125 515 108 511Z" fill="#4a4843"/>
        <path d="M108 318C130 305 150 304 162 306C205 312 232 360 232 415C232 475 205 522 165 520C140 518 125 515 108 511Z" fill="url(#gRing)"/>
        <path d="M108 318L150 322C232 330 232 490 170 509L108 511Z" fill="url(#gSide)"/>
        <ellipse cx="108" cy="415" rx="70" ry="96" fill="#4f4d47"/>
        <ellipse cx="109" cy="415" rx="57" ry="79" fill="#67635a"/>
        <ellipse cx="120" cy="415" rx="46" ry="77" fill="url(#gRing)"/>
        <path d="M150 362C120 355 105 385 105 415C105 450 125 472 150 468C172 450 172 380 150 362Z" fill="#45433e"/>
      </g>
    </defs>

    <g class="ln">
      <path d="M1225 330L1290 322L1410 370C1435 380 1440 405 1438 432L1403 600C1395 630 1380 638 1360 638C1320 642 1298 670 1295 706L1245 940L1170 930L1212 680C1212 640 1200 590 1165 560Z" fill="url(#gSide)"/>
      <path d="M1220 350L1260 335L1375 374C1395 385 1394 410 1386 440L1355 600C1350 630 1320 628 1300 642C1268 660 1255 680 1252 706L1205 935L1175 930L1212 650C1210 620 1200 590 1165 560Z" fill="#44423e"/>
      <ellipse cx="1280" cy="465" rx="66" ry="90" fill="#716d64"/><path d="M1334 485C1330 515 1318 534 1302 544" class="white"/>
      <path d="M1200 390L1280 385C1240 420 1230 500 1260 540L1180 545Z" fill="url(#gPin)"/>
      <path d="M1295 378L1325 385L1290 555H1258Z" fill="#4d4b46"/><path d="M1313 388L1280 550" class="hl"/>
      <path d="M1230 610C1235 570 1270 570 1265 610L1200 930L1175 925Z" fill="#37352f"/>
      <path d="M1243 675L1205 925M1212 680L1262 684M1252 706H1296M1386 432H1438M1376 507L1424 509M1358 602H1403"/>
      <path d="M1055 560L1085 560L1062 676L1036 674Z" fill="#4a4741"/>
    </g>
    <use href="#upBack" x="752" y="27"/>
    <use href="#upFront" x="752" y="27"/>
    <path d="M1110 340L1138 345L1110 480L1080 480Z" fill="#4a4741" class="ln"/>

    <use href="#piston" x="350" y="-30"/>
    <path d="M535 765L592 760L570 868C550 873 535 875 516 873Z" fill="#4b4843" class="ln"/>
    <use href="#piston" x="680" y="-16"/>
    <path d="M875 775L935 780L915 880C895 885 880 886 865 885Z" fill="#3f3d39" class="ln"/>
    <use href="#piston" x="976" y="72"/>
    <path d="M1180 925L1215 790H1280L1248 945C1230 960 1200 965 1165 955Z" fill="#4a4741"/><path d="M1215 790L1176 950M1240 790L1205 950M1280 790L1246 950" class="ln" fill="none"/><ellipse cx="1178" cy="932" rx="18" ry="26" fill="#5a564c" class="ln"/>

    <use href="#down" x="380" y="12"/>
    <ellipse cx="905" cy="660" rx="45" ry="72" fill="url(#gPin)" class="ln"/>
    <use href="#down" x="250" y="8"/>
    <path d="M800 300C860 290 905 350 900 420C895 470 880 490 868 495L820 400Z" fill="url(#gRing)" class="ln"/>
    <use href="#down" x="127" y="5"/>
    <ellipse cx="650" cy="650" rx="50" ry="75" fill="url(#gPin)" class="ln"/>
    <use href="#down"/>
    <use href="#hub" x="407" y="-24"/>
    <use href="#upBack"/>
    <use href="#upFront"/>

    <g class="ln">
      <path d="M300 330L362 336C392 340 405 355 404 395L374 540C368 580 355 603 330 603L300 602C275 615 266 640 265 672L225 835L210 900L160 905L133 860L170 640C172 600 160 560 125 530L200 533L290 470Z" fill="url(#gSide)"/>
      <path d="M302 332L345 340C358 350 358 370 354 400L318 570C312 600 285 603 262 612C235 625 217 650 213 672L165 900L160 890L133 800L168 650C172 600 160 560 125 525C220 545 300 500 306 430C308 390 290 360 302 332Z" fill="#4d4b46"/>
      <path d="M148 800L198 570C204 548 222 550 222 575L168 870L150 860Z" fill="#5a574f"/>
      <path d="M206 575L160 850M213 671L262 673M355 397L402 398M342 470L388 471M318 565L368 568"/>
    </g>
    <use href="#hub"/>
    <use href="#piston"/>
    <path d="M160 898L205 671H263L225 838L208 898C190 901 175 902 160 898Z" fill="#57544c"/><path d="M213 671L165 899M262 673L225 838" class="ln" fill="none"/><path d="M139 800L170 640L222 575L165 880L150 855L165 802Z" fill="#55524b"/><path d="M139 800L168 650M160 815L206 575M178 800L220 585" class="ln" fill="none"/>

    <path d="M1140 905H1415L1642 1000L1415 994L1240 940Z" class="plane"/>
    <path d="M1145 933L1368 940L1298 1257L1075 1250Z" class="plane strong"/>
    <path d="M1145 945L1379 1036L1306 1352L1075 1262Z" class="plane"/>
    <path d="M1145 890L1412 898" class="axis z"/>
    <path d="M1140 893L1412 1001" class="axis x"/>
    <path d="M1120 910L1033 1297" class="axis y"/>
    <circle cx="1125" cy="889" r="19" fill="#ddd" stroke="#999" stroke-width="3"/><circle cx="1122" cy="884" r="10" fill="#fff"/>
  </svg>

  <svg class="cube" viewBox="0 0 100 80">
    <path d="M18 7L53 20 42 71 10 53z" fill="#dedede"/><path d="M53 20L84 23 73 67 42 71z" fill="#ececec"/>
    <path d="M10 53L42 71M53 20L42 71M53 20L84 23 73 67 42 71M18 7L84 23" fill="none" stroke="#777" stroke-dasharray="6 2"/>
    <path d="M18 7L54 12" stroke="#5552dd" stroke-width="2"/><path d="M18 7L62 20" stroke="#e04848" stroke-width="2"/><path d="M18 7L8 61" stroke="#3edb3e" stroke-width="2"/>
    <text transform="matrix(-.7 -.25 .12 -1.150 45 38)" class="face">BOTTOM</text>
    <text transform="matrix(-.16 .9 -1 .05 64 31)" class="face">RIGHT</text>
    <text x="54" y="16" class="ax" fill="#8a88ee">Z</text><text x="62" y="27" class="ax" fill="#f06060">X</text><text x="2" y="72" class="ax" fill="#7fe87f">Y</text>
  </svg>

  <div class="bottom-row">
    <div class="panel comments"><span>COMMENTS</span><svg class="knob" viewBox="0 0 12 12"><circle cx="6" cy="6" r="6" fill="#333"/><path d="M3 6h6M6 3v6" stroke="#fff" stroke-width="1.500"/></svg></div>
    <div class="view-bar">
      <svg width="20" height="20" viewBox="0 0 20 20"><path d="M7 8c0-9 6-9 7-1 0 3 5 1 5 5 0 2-3 2-5 2-1 7-6 7-7 0-3 0-6-1-6-4s4-3 8-3" fill="#fafafa" stroke="#556" stroke-width="1.200"/><path d="M12 4l3 3M15 12l3-2" stroke="#333" stroke-width="1.800"/><path d="M10 7v6M7 10h6" stroke="#1f8ee8" stroke-width="1.400"/></svg><svg class="caret c1"><use href="#caret"/></svg>
      <svg class="v2" width="19" height="18" viewBox="0 0 19 18"><path d="M1 6h17v11H1z" fill="#e6e6e6" stroke="#555"/><path d="M4 9h11v5H4z" fill="#8d98aa" stroke="#444"/><path d="M2 4l4-3v2h6l2-2v3z" fill="#888" stroke="#555"/></svg>
      <svg class="v3" width="20" height="20" viewBox="0 0 20 20"><path d="M7 19C5 15 3 13 1 11c0-2 2-2 4 0L4 4c1-2 2-1 3 1l1 3V2c1-2 2-1 2 0l1 6 1-5c1-2 2-1 2 0l-1 6 2-3c2-1 2 0 1 2-1 4-1 7-2 11z" fill="#fff" stroke="#555"/></svg>
      <svg class="v4" width="21" height="20" viewBox="0 0 21 20"><circle cx="8" cy="8" r="6.500" fill="#e9f1f1" stroke="#778"/><path d="M12 12l7 7" stroke="#334" stroke-width="2.800"/><path d="M15 4h5M17.500 1.500v5M15 9h5" stroke="#333"/></svg>
      <svg class="v5" width="21" height="20" viewBox="0 0 21 20"><path d="M1 1h19v18H1z" fill="none" stroke="#999" stroke-dasharray="3 2"/><circle cx="9" cy="8" r="6.500" fill="#e9f1f1" stroke="#778"/><path d="M13 12l6 6" stroke="#334" stroke-width="2.800"/></svg><svg class="caret c2"><use href="#caret"/></svg>
      <svg class="v6" width="20" height="20" viewBox="0 0 20 20"><path d="M1 1h18v14H1z" fill="#dde" stroke="#667"/><path d="M3 3h14v10H3z" fill="#94b0da"/><path d="M8 15h4v2h3v2H5v-2h3z" fill="#888"/></svg><svg class="caret c3"><use href="#caret"/></svg>
      <svg class="v7" width="19" height="19" viewBox="0 0 19 19"><path d="M0 0h19v19H0z" fill="#eceef2"/><path d="M1 .5v18M4 .5v18M7.500.5v18M11 .5v18M14.500.5v18M18 .5v18M.5 1h18M.5 4.500h18M.5 8h18M.5 11.500h18M.5 15h18M.5 18.500h18" stroke="#667" stroke-width=".9"/></svg><svg class="caret c3"><use href="#caret"/></svg>
      <svg class="v8" width="20" height="18" viewBox="0 0 20 18"><path d="M.5.500h19v17H.5z" fill="#94b0da" stroke="#445a80"/><path d="M10 1v16M1 9h18" stroke="#445a80" stroke-width="1.400"/></svg><svg class="caret c4"><use href="#caret"/></svg>
    </div>
  </div>
</main>

<section class="timeline">
  <div class="scroll"><div class="thumb"></div></div>
  <div class="tl-body">
    <div class="play">
      <svg width="15" height="16" viewBox="0 0 15 16"><path d="M0 0h2v16H0zM15 1v14L3 8z" fill="#555"/></svg>
      <svg width="17" height="15" viewBox="0 0 17 15"><path d="M12 0v15L0 7.500zM14 4h2.500v7H14z" fill="#555"/></svg>
      <svg width="15" height="19" viewBox="0 0 15 19"><path d="M0 0l15 9.500L0 19z" fill="#555"/></svg>
      <svg width="17" height="15" viewBox="0 0 17 15"><path d="M5 0v15l12-7.500zM.5 4H3v7H.5z" fill="#555"/></svg>
      <svg width="15" height="16" viewBox="0 0 15 16"><path d="M13 0h2v16h-2zM0 1v14l12-7z" fill="#555"/></svg>
    </div>
    <div class="features">
      <i><svg><use href="#t-new"/></svg></i><i><svg><use href="#t-new"/></svg></i><i><svg><use href="#t-sketch"/></svg></i><i><svg><use href="#i-revolve"/></svg></i><i><svg><use href="#i-fillet"/></svg></i><i><svg><use href="#t-sketch"/></svg></i><i><svg><use href="#t-new"/></svg></i><i><svg><use href="#i-extrude"/></svg></i><i><svg><use href="#i-extrude"/></svg></i><i><svg><use href="#t-sketch"/></svg></i><i><svg><use href="#t-sketch"/></svg></i><i><svg><use href="#t-sketch"/></svg></i><i><svg><use href="#i-extrude"/></svg></i><i><svg><use href="#i-pattern"/></svg></i><i><svg><use href="#t-new"/></svg></i><i><svg><use href="#t-new"/></svg></i>
      <i><svg><use href="#i-flag"/></svg></i><i><svg><use href="#t-sketch"/></svg></i><i><svg><use href="#t-sketch"/></svg></i><i><svg><use href="#i-extrude"/></svg></i><i><svg><use href="#i-extrude"/></svg></i><i><svg><use href="#i-fillet"/></svg></i><i><svg><use href="#i-pattern"/></svg></i><i><svg><use href="#i-fillet"/></svg></i><i><svg><use href="#i-fillet"/></svg></i><i><svg><use href="#t-new"/></svg></i><i><svg><use href="#t-new"/></svg></i><i><svg><use href="#i-flag"/></svg></i><i><svg><use href="#t-cyl"/></svg></i><i><svg><use href="#i-fillet"/></svg></i><i><svg><use href="#i-pattern"/></svg></i><i><svg><use href="#t-new"/></svg></i><i><svg><use href="#t-sketch"/></svg></i><i><svg><use href="#i-extrude"/></svg></i><i><svg><use href="#i-extrude"/></svg></i><i><svg><use href="#i-extrude"/></svg></i><i><svg><use href="#i-extrude"/></svg></i>
      <i><svg><use href="#i-fillet"/></svg></i><i><svg><use href="#i-fillet"/></svg></i><i><svg><use href="#i-fillet"/></svg></i><i><svg><use href="#i-fillet"/></svg></i><i><svg><use href="#t-mirror"/></svg></i><i><svg><use href="#i-flag"/></svg></i><i class="hot"><svg><use href="#i-extrude"/></svg></i><i><svg><use href="#i-pattern"/></svg></i><i><svg><use href="#t-move"/></svg></i><i><svg><use href="#t-move"/></svg></i><i><svg><use href="#i-flag"/></svg></i><i><svg><use href="#i-combine"/></svg></i><i><svg><use href="#i-flag"/></svg></i><i><svg><use href="#i-extrude"/></svg></i><i class="current"><svg><use href="#t-sketch"/></svg><svg class="marker" viewBox="0 0 15 40"><path d="M0 0h15v6H0zM3 7h9l-4.500 5z" fill="#5f5f5f"/><path d="M7.500 10v30" stroke="#5f5f5f" stroke-width="3"/></svg></i><i class="off"><svg><use href="#i-flag"/></svg></i><i class="off"><svg><use href="#i-pattern"/></svg></i><i class="off"><svg><use href="#t-new"/></svg></i><i class="off"><svg><use href="#t-new"/></svg></i>
    </div>
    <div class="dashes"></div>
    <svg class="tl-gear"><use href="#gear"/></svg>
  </div>
</section>

<footer class="taskbar">
  <div class="weather">
    <svg width="34" height="36" viewBox="0 0 34 36"><circle cx="13" cy="21" r="12" fill="url(#gSun)"/><circle cx="22" cy="9" r="10" fill="#ff99a4"/><text x="22" y="14" text-anchor="middle" class="badge-t">1</text></svg>
    <div><b>29°C</b><span>Sunny</span></div>
  </div>
  <svg class="start" viewBox="0 0 29 29"><path d="M0 0h14v14H0zM15 0h14v14H15zM0 15h14v14H0zM15 15h14v14H15z" fill="url(#gWin)"/></svg>
  <div class="search">
    <svg width="18" height="19" viewBox="0 0 18 19"><circle cx="7.500" cy="7.500" r="6.500" fill="none" stroke="#eee" stroke-width="1.900"/><path d="M12 12.500l5 5.500" stroke="#eee" stroke-width="2.200"/></svg>
    <span>Search</span>
    <svg class="art" width="62" height="36" viewBox="0 0 62 36"><defs><clipPath id="artClip"><rect x="2" y="2" width="58" height="32" rx="16"/></clipPath></defs><g clip-path="url(#artClip)"><path d="M0 0h62v36H0z" fill="#2a2550"/><path d="M10 22h40v14H10z" fill="#151d5c"/><circle cx="9" cy="27" r="4" fill="#5a9aac"/><path d="M46 28h1.500v1.500H46zM52 29h1v1h-1zM24 31h1v1h-1z" fill="#fff"/></g><path d="M23 3h30c4 3 7 7 8 12-5 6-12 10-20 9C31 22 24 13 23 3z" fill="url(#gPlanet)"/><path d="M2 5c8 1 17 7 23 14l-4 5C12 20 6 14 2 5z" fill="#cfc9dc"/><path d="M10 15l-4 5 8 0zM18 10l8 4-5 2z" fill="#8a84a8"/><path d="M25 20l6 9-8-5z" fill="#8fd8ff"/></svg>
  </div>
  <div class="apps">
    <div class="app"><svg viewBox="0 0 32 32"><path d="M9 2h23v22H9z" fill="#ececec"/><path d="M1 10h23v20H1z" fill="#777" fill-opacity=".85"/></svg></div>
    <div class="app"><svg viewBox="0 0 32 32"><path d="M16 3a14 13 0 1 1-6 26l-9 2 2-8A14 13 0 0 1 16 3z" fill="url(#gChat)"/><path d="M7 11h12v11H7zM20 14l4-2v9l-4-2z" fill="#fff"/></svg><em class="badge">1</em></div>
    <div class="app run"><svg viewBox="0 0 32 32"><circle cx="16" cy="16" r="15.500" fill="url(#gEdge)"/><path d="M1 14c3-6 16-8 18-1-8-1-9 12 2 14 4 0 7-1 9-3-3 6-8 7.500-13 7.500C7 31.500 0 24 1 14z" fill="#0f58b4"/><path d="M18 12c3 4-3 6 2 8s9-1 11-4c0 5-4 7-9 7-7 0-9-7-4-11z" fill="#222"/></svg></div>
    <div class="app"><svg viewBox="0 0 32 32"><path d="M1 3h10l3 3v6H1z" fill="#d9940c"/><path d="M1 7h31v23H1z" fill="#fbcb44"/><path d="M6 30v-6l3-2h15l3 2v6z" fill="#1b7fd0"/><path d="M11 26h12" stroke="#0d4d8c" stroke-width="1.500"/></svg></div>
    <div class="app"><svg viewBox="0 0 32 32"><path d="M9 7V2h14v5" fill="none" stroke="#35b6f2" stroke-width="2"/><path d="M1 5h30v23a3 3 0 0 1-3 3H4a3 3 0 0 1-3-3z" fill="#f6f6f6"/><path d="M10 12h6v6h-6z" fill="#f25022"/><path d="M17 12h6v6h-6z" fill="#7fba00"/><path d="M10 19h6v6h-6z" fill="#00a4ef"/><path d="M17 19h6v6h-6z" fill="#ffb900"/></svg></div>
    <div class="app run"><svg viewBox="0 0 32 32"><path d="M2 30l2-8A13.500 13.500 0 1 1 9 28z" fill="none" stroke="#25d366" stroke-width="2.800"/><path d="M11 9c-3 3 0 8 3 11s7 4 9 1c1-2-1-3-3-4l-2 2c-2-1-4-3-4-5l1-2c-1-2-2-4-4-3z" fill="#25d366"/></svg><em class="badge">5</em></div>
    <div class="app"><svg viewBox="0 0 32 32"><path d="M0 1h32v31H0z" fill="#0596d7"/><text x="2.500" y="19" class="my">my</text><text x="14" y="20" class="hp">hp</text></svg></div>
    <div class="app"><svg viewBox="0 0 32 32"><circle cx="16" cy="16" r="15.500" fill="#fbc116"/><path d="M2.500 8.500A15.500 15.500 0 0 1 29.500 9H16z" fill="#e33b2e"/><path d="M2.500 8.500A15.500 15.500 0 0 0 14 31.400l7-11.400z" fill="#34a853"/><path d="M3 8.500L11 21l5-12z" fill="#34a853"/><path d="M3 8.500L9 16l7-7z" fill="#e33b2e"/><circle cx="16" cy="16" r="7.300" fill="#fff"/><circle cx="16" cy="16" r="5.700" fill="#3b7ded"/></svg></div>
    <div class="app"><svg viewBox="0 0 32 32"><circle cx="16" cy="16" r="14.500" fill="#0e86cf" stroke="#fff" stroke-width="2"/><text x="16" y="26" text-anchor="middle" class="big-q">?</text></svg><em class="badge dot"></em></div>
    <div class="app"><svg viewBox="0 0 32 32"><path d="M20 1c3 4 4 5 4 8l3-4c4 4 4 9 4 13 0 8-6 13.500-15 13.500S1 25 1 17c0-5 1-8 4-12l2 4h6c1-4 3-6 7-8z" fill="url(#gFox)"/><circle cx="16" cy="17.500" r="6" fill="#8a3fd0"/><path d="M7 12l9 1-2 5-5 3z" fill="#ff8a1e"/></svg></div>
    <div class="app"><svg viewBox="0 0 32 32"><rect width="32" height="32" rx="2" fill="#4b4b4b"/><path d="M25 7v5L8 17v-5zM25 17v5L8 27v-5zM8 12l17 5v5L8 17z" fill="#ff9800"/></svg></div>
    <div class="app fus"><svg viewBox="0 0 32 32"><path d="M2 3l4-3v25l-4 1z" fill="#ff9a4a"/><path d="M6 0h24v24H6z" fill="#ff6b00"/><path d="M5 23h25v9H5z" fill="#8f3a00"/><text x="17.500" y="18" text-anchor="middle" class="f-big">F</text><text x="18" y="30" text-anchor="middle" class="f-sm">FUS</text></svg></div>
    <div class="app run"><svg viewBox="0 0 32 32"><path d="M23 0l9 4v24l-9 4L0 12l3-3 20 14V9L4 24l-3-3z" fill="#2490db"/><path d="M23 0l9 4v24l-9 4z" fill="#35a7f3"/></svg></div>
    <div class="app snip"><svg viewBox="0 0 32 32"><rect width="24" height="24" rx="3" fill="#eef2f6"/><path d="M4.500 20V5H19" fill="none" stroke="#d8421c" stroke-width="3.500" stroke-dasharray="3.500 1.500"/><path d="M8 8h11v11H8z" fill="#dfe5ec" stroke="#aab4c0"/><path d="M17 18h12M19 10v16" stroke="#8a98a8" stroke-width="2.600"/><circle cx="29" cy="18" r="3" fill="none" stroke="#1993e0" stroke-width="2"/><circle cx="18" cy="29" r="2.800" fill="none" stroke="#1993e0" stroke-width="2"/></svg></div>
  </div>
  <div class="tray">
    <svg width="14" height="9" viewBox="0 0 14 9"><path d="M1 8l6-6 6 6" fill="none" stroke="#fff" stroke-width="1.700"/></svg>
    <svg class="cloud" width="22" height="18" viewBox="0 0 22 18"><path d="M5 14a5 5 0 0 1 0-9 6 6 0 0 1 11-1 5 5 0 0 1 2 10z" fill="#8f8f8f"/><path d="M5 14a5 5 0 0 1 0-9c4 0 5 2 8 4l3 5z" fill="#ddd"/><circle cx="15.500" cy="12" r="5.500" fill="#1b7fd0" stroke="#fff"/><path d="M12.500 12a3 3 0 0 1 5-2M18.500 12a3 3 0 0 1-5 2" stroke="#fff" fill="none" stroke-width="1.400"/></svg>
    <div class="lang">ENG<br>IN</div>
    <svg class="wifi" width="21" height="16" viewBox="0 0 21 16"><path d="M1 6.500c5-6.500 14-6.500 19 0M4 9.500c3.500-4.500 9.500-4.500 13 0M7 12.200c2-2.400 5-2.400 7 0" fill="none" stroke="#fff" stroke-width="1.700"/><circle cx="10.500" cy="14" r="1.700" fill="#fff"/></svg>
    <svg class="spk" width="20" height="16" viewBox="0 0 20 16"><path d="M1 5h3l5-4v14l-5-4H1z" fill="none" stroke="#fff" stroke-width="1.500"/><path d="M12 5c1.500 2 1.500 4 0 6" fill="none" stroke="#fff" stroke-width="1.400"/><path d="M14.500 3c3 3 3 7 0 10M17 1c4 4 4 10 0 14" fill="none" stroke="#777" stroke-width="1.300"/></svg>
    <svg class="bat" width="21" height="17" viewBox="0 0 21 17"><path d="M7 4h9a2 2 0 0 1 2 2v7a2 2 0 0 1-2 2H4a2 2 0 0 1-2-2v-3" fill="none" stroke="#fff" stroke-width="1.500"/><path d="M6 7h10v6H5z" fill="#fff"/><path d="M18 8h2v4h-2zM4 0L0 7h3l-1 5 5-7H4z" fill="#fff"/></svg>
    <div class="clock">09:49<br>14-04-2024</div>
    <svg class="nbell" width="17" height="20" viewBox="0 0 17 20"><path d="M8.500 0C13 0 14.500 3 14.500 7l.5 5 2 4H0l2-4 .5-5c0-4 1.500-7 6-7zM5.500 17h6c-.5 3-5.500 3-6 0z" fill="#eaaef0"/></svg>
  </div>
</footer>
</body>
</html>
```
FILE: styles.css
```css
* { box-sizing: border-box; }
html, body { margin: 0; width: 1920px; height: 1080px; overflow: hidden; }
body { display: flex; flex-direction: column; background: #fff; color: #333; font-family: "Liberation Sans", Arial, sans-serif; font-size: 13.6px; }
svg { display: block; flex: none; overflow: visible; }
.defs { position: absolute; }
.caret { width: 7px; height: 6px; color: #333; }

.title-bar { height: 29px; flex: none; display: flex; align-items: center; padding-left: 3px; background: linear-gradient(90deg, #f3f1f9 0 62%, #f6eef8 72%, #fbeef7 82%, #f5eff7 88%, #f3eff7); }
.app-logo { width: 18px; height: 20px; }
.logo-f { font: bold 11px "Liberation Sans", sans-serif; fill: #fff; }
.app-title { margin-left: 7px; font: 14px "Open Sans", sans-serif; color: #111; letter-spacing: .07px; }
.win-controls { margin-left: auto; margin-right: 26px; display: flex; gap: 47px; align-items: center; }

.doc-bar { height: 40px; flex: none; display: flex; align-items: flex-end; background: #cbcbcb; }
.quick { width: 243px; height: 40px; padding-left: 11px; display: flex; align-items: center; }
.q-grid { width: 18px; height: 18px; }
.q-file { width: 17px; height: 20px; margin-left: 24px; }
.q-caret { width: 8px; height: 6px; margin-left: 7px; color: #555; }
.q-caret.dim { color: #8f8f8f; }
.q-save { width: 18px; height: 18px; margin-left: 24px; }
.q-undo, .q-redo { width: 17px; height: 16px; }
.q-undo { margin-left: 24px; }
.q-redo { margin-left: 15px; }
.tab { height: 35px; border-radius: 5px 5px 0 0; background: #bbb; display: flex; align-items: center; justify-content: center; }
.home { width: 48px; margin-right: 5px; padding: 4px 0 0 4px; }
.doc { width: 669px; margin-right: 5px; padding: 1px 8px 0 12px; font-size: 15px; color: #6f6f6f; gap: 6px; }
.doc > :first-child { margin-left: auto; }
.doc .close { width: 12px; height: 12px; margin-left: auto; color: #777; }
.doc.active { background: #f1f1f1; color: #333; }
.add { width: 36px; padding-left: 2px; }
.account { display: flex; align-items: center; height: 40px; margin-left: 15px; }
.account svg + svg { margin-left: 22px; }
.jobs { margin: 0 29px 0 4px; font-size: 14px; color: #444; }
.account .a-help { margin-left: 22px; }
.account svg:last-child { margin-left: 22px; }
.q-mark { font: bold 16px "Liberation Sans", sans-serif; fill: #ddd; }

.ribbon { height: 106px; flex: none; display: flex; background: #f1f1f1; position: relative; }
.ribbon::after { content: ""; position: absolute; left: 0; right: 0; top: 102px; height: 1px; background: #c6c6c6; }
.workspace { width: 157px; padding: 13px 0 0 14px; }
.ws-button { width: 138px; height: 76px; border: 2px solid #dcdcdc; border-radius: 6px; display: flex; align-items: center; justify-content: center; gap: 7px; font-weight: bold; font-size: 13.5px; padding-bottom: 2px; }
.ribbon-tabs { height: 30px; margin-left: 16px; display: flex; gap: 28.5px; font-size: 13.5px; }
.ribbon-tabs span { padding: 6px 15px 0; }
.ribbon-tabs .on { color: #0696d7; font-weight: bold; border-bottom: 4px solid #0696d7; height: 29px; }
.groups { display: flex; margin-top: 3px; height: 63px; }
.group { border-right: 1.5px solid #cfcfcf; display: flex; flex-direction: column; align-items: center; }
.group:last-child { border: 0; }
.icons { display: flex; gap: 14px; height: 41px; align-items: center; padding-top: 1px; }
.icons svg { width: 40px; height: 40px; }
.icons .sel { width: 48px; height: 47px; margin: -4px -1px -4px 1px; }
.label { display: flex; align-items: center; gap: 4px; font-size: 13.5px; margin-top: 8px; line-height: 16px; }
.g-create { width: 336px; } .g-automate { width: 124px; } .g-modify { width: 282px; } .g-assemble { width: 175px; } .g-configure { width: 130px; }
.g-construct { width: 130px; } .g-inspect { width: 106px; } .g-insert { width: 174px; } .g-select { width: 99px; } .g-position { width: 119px; }

.canvas { flex: 1; position: relative; display: flex; flex-direction: column; justify-content: space-between; background: #fff; }
.side { padding: 5px 0 0 5px; }
.panel { width: 374px; height: 31px; background: #f1f1f1; border: 1px solid #c9c9c9; border-bottom-width: 2px; display: flex; align-items: center; color: #666; }
.browser-head { padding: 0 13px 0 6px; gap: 11px; }
.knob { width: 12px; height: 12px; margin-left: auto; }
.tree { padding-top: 3px; }
.row { height: 30px; display: flex; align-items: center; padding-left: 46px; }
.row .tri { width: 9px; height: 13px; margin-right: 13px; }
.chip { height: 25px; background: #f1f1f1; display: flex; align-items: center; padding-left: 4px; white-space: nowrap; }
.chip .eye { width: 20px; height: 14px; }
.chip .folder { width: 21px; height: 17px; margin-left: 10px; }
.chip .comp { width: 18px; height: 19px; margin: 0 2px 0 11px; }
.chip > span { margin-left: 17px; }
.chip .gear { width: 17px; height: 17px; margin-left: -1px; }
.chip .t-doc { margin-left: 16px; }
.w-views .folder { margin-left: -1px; }
.w-views .t-views { margin-left: 17px; }
.w-doc { width: 167px; } .w-views { width: 137px; } .w-origin { width: 123px; } .w-sk { width: 143px; } .w-piston { width: 133px; } .w-rods { width: 193px; } .w-pins { width: 138px; } .w-crank { width: 163px; }
.root { padding-left: 23px; }
.open { width: 9px; height: 9px; margin-right: 13px; }
.root .chip { width: 270px; }
.chosen { height: 20px; width: 207px; margin-left: 7px; background: #999; color: #fff; font-weight: bold; display: flex; align-items: center; font-size: 13.7px; }
.chosen .comp { margin: 0 18px 0 5px; }
.radio { width: 17px; height: 17px; margin-left: 6px; }

.model { position: absolute; left: 720px; top: 195px; width: 560px; height: 460px; }
.ln { stroke: #0d0d0c; stroke-width: 3.200; stroke-linejoin: round; }
.ln > path:not([fill]) { fill: none; }
.ln .hl, path.hl { stroke: #a9a7a1; stroke-width: 3; fill: none; }
.ln .white { stroke: #eee; stroke-width: 5; fill: none; }
.ln .rings { stroke: #0c0c0c; stroke-width: 6; fill: none; }
.plane { fill: #ffa500; fill-opacity: .3; stroke: #f0a030; stroke-opacity: .35; stroke-width: 2; }
.plane.strong { fill-opacity: .34; }
.axis { fill: none; stroke-width: 7; }
.axis.z { stroke: #00f; stroke-dasharray: 100 14 22 14; }
.axis.x { stroke: #f00; stroke-dasharray: 125 14 105 14; }
.axis.y { stroke: #0e0; stroke-dasharray: 248 14 22 14; }
.cube { position: absolute; left: 1810px; top: 25px; width: 100px; height: 80px; }
.face { font: bold 10px "Liberation Sans", sans-serif; fill: #999; }
.ax { font: 12px "Liberation Sans", sans-serif; }

.bottom-row { display: flex; padding: 0 0 6px 5px; align-items: flex-end; }
.comments { height: 31px; border-top: 0; padding: 0 13px 0 30px; }
.view-bar { margin: 0 0 2px 434px; width: 296px; height: 30px; background: #f1f1f1; display: flex; align-items: center; padding-left: 4px; }
.c1 { margin-left: 6px; } .v2 { margin-left: 8px; } .v3 { margin-left: 13px; } .v4 { margin-left: 12px; } .v5 { margin-left: 11px; } .c2 { margin-left: 5px; } .v6 { margin-left: 9px; } .c3 { margin-left: 3px; } .v7 { margin-left: 8px; } .v8 { margin-left: 9px; } .c4 { margin-left: 3px; }

.timeline { height: 62px; flex: none; background: #f1f1f1; border-top: 1px solid #d2d2d2; }
.scroll { height: 8px; padding-left: 5px; }
.thumb { width: 1734px; height: 8px; background: #cacaca; border-radius: 4px; }
.tl-body { height: 53px; display: flex; }
.play { width: 178px; height: 53px; padding-left: 13px; display: flex; gap: 15px; align-items: center; }
.features { display: flex; height: 43px; width: 1671px; }
.features i { flex: none; width: 30px; height: 43px; display: flex; flex-direction: column; align-items: center; padding-top: 11px; border-bottom: 2px solid #cacaca; position: relative; }
.features i > svg { width: 20px; height: 20px; }
.features i::after { content: ""; position: absolute; left: 15px; bottom: 0; width: 3px; height: 6px; background: #cacaca; }
.features i:first-child { border-image: linear-gradient(90deg, transparent 50%, #cacaca 50%) 2; border-width: 0 0 2px; border-style: solid; }
.features i:last-child { width: 21px; align-items: flex-start; padding-left: 5px; }
.dashes { width: 14px; height: 43px; margin-left: 3px; border-bottom: 2px dashed #cacaca; }
.features .hot::before { content: ""; position: absolute; left: 0; top: 6px; width: 29px; height: 30px; background: #e6e922; border-radius: 2px; }
.features .hot svg { position: relative; }
.features .off svg { opacity: .3; }
.features i > .marker { position: absolute; left: 22px; top: 3px; width: 15px; height: 40px; z-index: 2; }
.tl-gear { width: 20px; height: 20px; margin: 16px 0 0 18px; }

.taskbar { height: 60px; flex: none; display: flex; align-items: center; color: #fff; border-top: 1px solid #453c4a; background: linear-gradient(90deg, #241d33 0 24%, #301839 31%, #2d1f30 35%, #272727 38% 78%, #2b2020 84%, #351918); font: 15px "Open Sans", sans-serif; }
.weather { width: 378px; padding: 0 0 2px 27px; display: flex; align-items: center; gap: 3px; line-height: 20px; font-size: 14px; }
.weather b, .weather span { display: block; font-weight: 400; }
.weather span { color: #c8c4ce; }
.badge-t { font: 14px "Open Sans", sans-serif; fill: #222; }
.start { width: 29px; height: 29px; }
.search { width: 275px; height: 40px; margin-left: 17px; border-radius: 20px; background: #4a3b55; border: 1px solid #5b4b63; display: flex; align-items: center; padding-left: 14px; gap: 13px; color: #dcd6e0; font-size: 16px; letter-spacing: .1px; }
.art { margin-left: auto; margin-right: 2px; }
.apps { display: flex; margin-left: 2px; }
.app { width: 55px; height: 50px; display: flex; align-items: center; justify-content: center; position: relative; }
.app > svg { width: 30px; height: 30px; }
.run::after, .fus::after, .snip::after { content: ""; position: absolute; bottom: 1px; left: 24px; width: 8px; height: 4px; border-radius: 2px; background: #999; }
.badge { position: absolute; left: 28px; top: -1px; width: 20px; height: 20px; border-radius: 50%; background: #d6a0e2; color: #222; font: 14px/20px "Open Sans", sans-serif; text-align: center; }
.badge.dot { background: #ffbe0b; }
.my { font: 9px "Open Sans", sans-serif; fill: #fff; }
.hp { font: italic bold 13px "Open Sans", sans-serif; fill: #fff; }
.big-q { font: bold 27px "Open Sans", sans-serif; fill: #fff; }
.f-big { font: bold 17px "Liberation Sans", sans-serif; fill: #fff; }
.f-sm { font: bold 7px "Liberation Sans", sans-serif; fill: #fff; }
.fus, .snip { border-radius: 5px; box-shadow: inset 2px 0 #272727, inset -3px 0 #272727; background: #363636; }
.fus::after { left: 17px; width: 20px; background: #d6a0e2; }
.snip { background: #462527; }
.snip::after { background: #ff99a4; }
.tray { margin-left: auto; display: flex; align-items: center; padding-right: 26px; font-size: 14px; text-align: center; }
.cloud { margin-left: 22px; }
.lang { width: 30px; margin-left: 22px; font-size: 14.4px; line-height: 20px; }
.wifi { margin-left: 22px; } .spk { margin-left: 9px; } .bat { margin-left: 9px; }
.clock { width: 84px; margin-left: 13px; text-align: right; line-height: 20px; font-size: 14.6px; padding-bottom: 1px; }
.nbell { margin-left: 11px; }
```
